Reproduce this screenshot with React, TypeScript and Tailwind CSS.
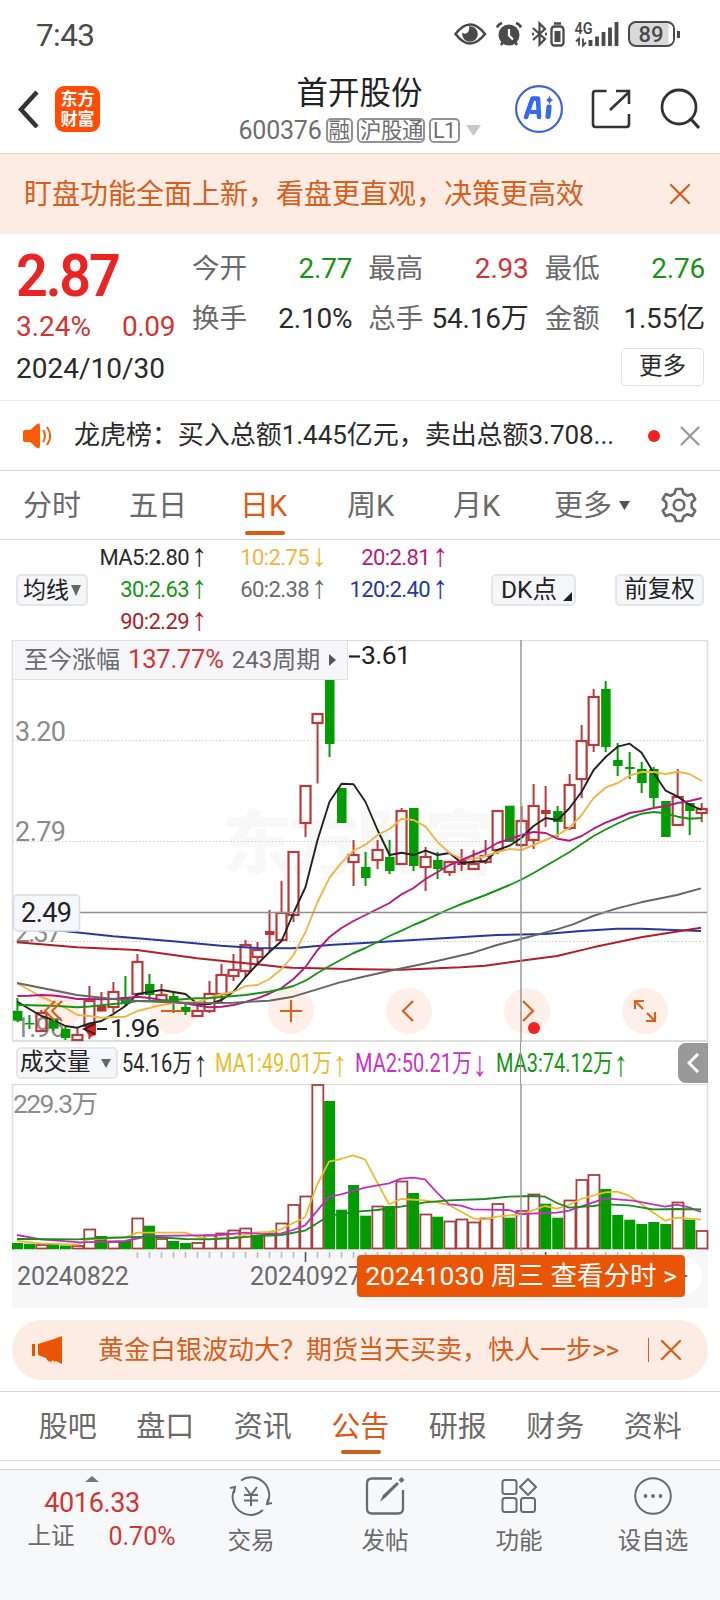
import React from 'react';
import { X } from 'lucide-react';

type Candle = [string, number, number, number, number];
type Point = [number, number];

// [colour, high, body top, body bottom, low]
const candles: Candle[] = [
  ['g', 998, 1010.7, 1020.7, 1022], ['g', 1015, 1023, 1024.5, 1029], ['r', 1010, 1012, 1031, 1032],
  ['g', 1018, 1019, 1028.7, 1031], ['g', 1027, 1029, 1038, 1040], ['r', 1028, 1034, 1040, 1041],
  ['r', 986, 1000, 1026, 1039], ['f', 992, 1006, 1011.5, 1012], ['r', 982, 991, 1007, 1013],
  ['g', 976, 997, 1004, 1006], ['r', 954, 961, 994, 998], ['g', 974, 984, 995, 1000],
  ['r', 984, 994, 1001, 1003], ['g', 991, 996, 1002, 1013], ['g', 1003, 1007, 1012, 1015],
  ['r', 1002, 1010, 1016, 1017], ['r', 981, 993, 1011, 1013], ['r', 964, 974, 994, 1003],
  ['r', 954, 969, 976, 981], ['r', 940, 944, 971, 977], ['r', 942, 949, 957, 963],
  ['f', 910, 931, 935, 952], ['r', 881, 912, 940, 941], ['r', 851, 851, 915, 922],
  ['r', 785, 785, 823, 837], ['r', 713, 713, 723, 783.5], ['g', 650, 650, 744, 757],
  ['g', 788, 788, 823, 823], ['r', 840, 854, 862, 886], ['g', 852, 867, 878, 886],
  ['r', 840, 849, 860, 869], ['g', 840, 857, 871, 874], ['r', 808, 810, 864, 864],
  ['g', 808, 808, 866, 871], ['r', 847, 856, 867, 891], ['g', 852, 860, 869, 879],
  ['r', 861, 861, 872, 876], ['f', 849, 860, 865, 871], ['r', 850, 863, 869, 870],
  ['r', 840, 855, 862, 864], ['r', 810, 810, 850, 854], ['g', 805.7, 805.7, 842, 842],
  ['r', 806, 820, 845, 847], ['r', 784, 805, 840, 849], ['f', 786, 810, 814, 827],
  ['g', 806, 811, 822, 837], ['r', 774, 784, 828, 830], ['r', 725, 740, 779, 798],
  ['r', 689, 696, 745, 752], ['g', 681, 689, 747, 752], ['g', 743, 760, 766, 776],
  ['g', 752, 767, 769, 779], ['g', 762, 769, 783, 793], ['g', 767, 769, 798, 807],
  ['g', 801, 801, 837, 837], ['r', 769, 796, 825, 825], ['g', 803, 803, 811, 835],
  ['r', 803, 808, 813, 822],
];

const volumes = [
  1243, 1243.7, 1244.5, 1243.5, 1245.5, 1245.5, 1229, 1236, 1241.5, 1241, 1218, 1225.7, 1238.5, 1241, 1243,
  1242.5, 1235, 1233, 1230, 1228, 1235, 1233, 1223, 1204.5, 1196, 1084.5, 1101, 1209.7, 1185, 1215.7,
  1206, 1206, 1181, 1193, 1214, 1216.7, 1221, 1219, 1222, 1218, 1203.5, 1217.7, 1210.5, 1194, 1203.7,
  1217.7, 1200, 1179.5, 1174.5, 1189, 1215, 1219.7, 1224, 1222, 1224, 1202, 1219.7, 1230.5,
];

// days whose volume bar is green although the candle is red
const greenVolume = [7, 20, 28, 44];

const ma5 = [
  1001.7, 1009, 1016, 1020, 1026, 1027.7, 1023.5, 1021, 1014, 1006, 994, 992, 990, 992, 994, 1004, 1004, 1000,
  991.7, 977, 964, 952, 941, 913, 887, 840, 801.7, 783.7, 784.3, 802, 830, 855, 852.7, 855, 850.7, 855, 853,
  863, 861.7, 861, 850, 845.7, 837.7, 826, 818, 820, 808, 791.7, 770, 757, 746.7, 743.7, 752.7, 772.7, 790.7,
  796.7, 804.7, 810,
];
const ma10 = [
  983.3, 990, 997, 1002, 1008, 1015, 1016, 1017.7, 1017, 1016.7, 1011, 1008, 1005, 1003, 1003, 1002, 998, 994,
  992, 986, 985, 979, 969, 955, 932, 902, 877.7, 862.7, 850.7, 844.7, 835, 829, 818.7, 820, 826.7, 842, 853,
  859, 858.7, 856, 852, 849, 850, 845, 840, 835, 827.7, 815, 798, 787.7, 783, 775.7, 772, 772, 774, 771.7, 774, 781,
];
const ma20 = [
  996, 995.7, 995, 995.5, 997, 999, 999, 999.3, 999, 998, 996.7, 998, 1000, 1001.7, 1003.3, 1005.5, 1007.3,
  1006.7, 1005, 1002, 998.3, 993.5, 988, 979, 967, 950, 937, 928, 921, 915, 909, 903, 894.3, 888, 879, 872,
  865, 860, 855, 850, 843, 839, 835, 832, 833, 838.7, 840.7, 836, 828.7, 822.7, 818, 813, 811, 808, 806, 803, 801, 798,
];
const ma30 = [
  1005, 1005.3, 1005.5, 1005.7, 1006.5, 1007.3, 1006.5, 1005.3, 1004, 1003, 1001, 1001, 1000.7, 1000, 999,
  998.3, 998, 997, 996, 995, 993.3, 991.5, 989, 986, 980.7, 973, 966, 959.5, 953, 948, 942, 936, 930.7, 925,
  920, 914.3, 909, 904, 899.5, 895, 890, 885, 879.5, 873, 866, 859, 852, 844, 836, 829.5, 823.5, 818, 813.7,
  812, 813.3, 816.7, 818.7, 818,
];
const ma60: Point[] = [
  [17, 983], [77, 995], [113, 999], [137, 1001], [197, 1003.3], [233, 1002.7], [269, 1000.7], [293, 996.7],
  [317, 989.3], [339, 982.7], [360, 977.5], [389, 971], [437, 961], [473, 952.7], [497, 945], [521, 939],
  [557, 929.3], [573, 924.3], [593, 916], [617, 908.3], [641, 902.3], [677, 895], [701, 888.3],
];
const ma90: Point[] = [
  [17, 942.3], [77, 947.3], [137, 950], [197, 958.3], [233, 962], [257, 964.3], [281, 967], [293, 967.7],
  [360, 969.3], [401, 969.7], [461, 967.3], [485, 965.7], [521, 960.7], [557, 956], [593, 947.3], [641, 937.3], [701, 927.7],
];
const ma120: Point[] = [
  [17, 926], [113, 936.3], [173, 941.3], [221, 945.7], [257, 948], [293, 948.3], [317, 946], [333, 944.7],
  [360, 943.3], [401, 940.7], [497, 935], [545, 934], [581, 931], [617, 928.7], [641, 928.7], [701, 931],
];

const volYellow: Point[] = [
  [17, 1241], [41, 1243.3], [77, 1244.7], [89, 1239.3], [125, 1237.7], [137, 1232.7], [185, 1232.7], [197, 1236.7],
  [209, 1239], [233, 1237.3], [257, 1232.3], [269, 1232], [281, 1229.3], [305, 1217.3], [317, 1185], [329, 1161.7],
  [341, 1159], [353, 1155.3], [365, 1159.3], [389, 1204.3], [401, 1199], [425, 1200.3], [437, 1202.3], [449, 1205],
  [473, 1218.3], [485, 1219.3], [497, 1216.7], [521, 1214.3], [545, 1206], [557, 1208.7], [569, 1205], [581, 1199],
  [605, 1192.3], [617, 1191.7], [629, 1195.7], [665, 1220.7], [677, 1217.7], [701, 1219.7],
];
const volPurple: Point[] = [
  [17, 1235], [41, 1239.3], [80, 1242.3], [125, 1241], [149, 1236], [197, 1235.3], [221, 1235], [245, 1232.7],
  [269, 1234.7], [281, 1233.3], [293, 1230], [305, 1225.3], [329, 1196.7], [341, 1194.3], [365, 1187.7],
  [389, 1183.3], [401, 1178.7], [413, 1177.7], [425, 1179.3], [437, 1192.7], [449, 1204.3], [461, 1205.7],
  [473, 1209.3], [509, 1210], [521, 1214], [557, 1212.7], [569, 1210.7], [605, 1198.3], [633, 1200.7],
  [665, 1206.7], [677, 1204.7], [689, 1207.3], [701, 1212],
];
const volGreen: Point[] = [
  [17, 1239], [77, 1239.3], [101, 1238], [149, 1236.7], [185, 1239], [209, 1239.3], [233, 1238], [257, 1236],
  [281, 1235], [305, 1230.7], [329, 1215.7], [360, 1211.3], [377, 1210], [401, 1206.7], [425, 1202.3],
  [449, 1200.3], [485, 1199], [509, 1196.7], [533, 1196], [545, 1196.7], [557, 1203], [569, 1207.7],
  [593, 1206], [605, 1204.3], [629, 1205.3], [653, 1209.3], [677, 1209], [701, 1209.3],
];

const cx = (i: number) => 17.4 + 12.005 * i;
const join = (pts: Point[]) => pts.map((p) => p.join(',')).join(' ');
const series = (ys: number[]) => join(ys.map((y, i) => [cx(i), y] as Point));

const RED = '#b83a3a';
const GREEN = '#009c00';

const quotes = [
  { label: '今开', value: '2.77', color: 'text-[#149614]' },
  { label: '最高', value: '2.93', color: 'text-[#d23434]' },
  { label: '最低', value: '2.76', color: 'text-[#149614]' },
  { label: '换手', value: '2.10%', color: 'text-[#2b2b2b]' },
  { label: '总手', value: '54.16万', color: 'text-[#2b2b2b]' },
  { label: '金额', value: '1.55亿', color: 'text-[#2b2b2b]' },
];

const averages = [
  { text: 'MA5:2.80', arrow: '↑', color: 'text-[#2b2b2b]' },
  { text: '10:2.75', arrow: '↓', color: 'text-[#efb643]' },
  { text: '20:2.81', arrow: '↑', color: 'text-[#b8197f]' },
  { text: '30:2.63', arrow: '↑', color: 'text-[#149614]' },
  { text: '60:2.38', arrow: '↑', color: 'text-[#6b6b6b]' },
  { text: '120:2.40', arrow: '↑', color: 'text-[#2438a0]' },
  { text: '90:2.29', arrow: '↑', color: 'text-[#b01e28]' },
];

const volumeLabels = [
  { text: '54.16万', arrow: '↑', color: 'text-[#2b2b2b]', box: 'w-[93px]' },
  { text: 'MA1:49.01万', arrow: '↑', color: 'text-[#e8bd2c]', box: 'w-[140px]' },
  { text: 'MA2:50.21万', arrow: '↓', color: 'text-[#c832c8]', box: 'w-[141px]' },
  { text: 'MA3:74.12万', arrow: '↑', color: 'text-[#149614]', box: 'w-[140px]' },
];

const Arrow = ({ children }: { children: string }) => (
  <span className="ml-[3px] inline-block w-[14px] origin-center scale-[1.45] text-center font-['Liberation_Sans']">{children}</span>
);

const StatusBar = () => (
  <div className="flex h-[68px] items-center justify-between pl-9 pr-[39px] text-[#4a4a4a]">
    <span className="pt-[3px] text-[31.5px] tracking-[-0.6px]">7:43</span>
    <svg width="228" height="40" viewBox="453 14 228 40" fill="none" stroke="#4a4a4a">
      <path d="M455.500 34 Q470 15 485 34 Q470 53 455.500 34Z" strokeWidth="2.600" />
      <circle cx="470" cy="34" r="7.800" fill="#4a4a4a" stroke="none" />
      <path d="M469 26a7 7 0 0 0-7 6q2 3 5 1 3-2 2-7Z" fill="#fff" stroke="none" />
      <circle cx="509" cy="35" r="10.500" fill="#4a4a4a" stroke="none" />
      <path d="M509 29v6.500l4 4" stroke="#fff" strokeWidth="2.200" />
      <path d="M497 27.500q1-3 5-4.500M521 27.500q-1-3-5-4.500M501 45l2-3M517 45l-2-3" strokeWidth="2.600" />
      <path d="M533 28l12 11-5.500 5.500V23.500L545 29l-12 11" strokeWidth="2.200" />
      <path d="M532 34h2M545 34h2" strokeWidth="2.500" />
      <rect x="551.500" y="26.500" width="12" height="19" rx="3" strokeWidth="2.300" />
      <path d="M554 23.500h7" strokeWidth="2.500" />
      <rect x="554.500" y="31" width="6" height="11" fill="#4a4a4a" stroke="none" />
      <text x="574.500" y="34" fontSize="16" fontWeight="600" fill="#4a4a4a" stroke="none" textLength="18" lengthAdjust="spacingAndGlyphs">4G</text>
      <path d="M579 45.500v-7l-3 3M583 38.500v7l3-3" strokeWidth="1.800" />
      <path d="M590.500 46v-6M597 46V36.500M603.500 46V32M610 46V27.500M616.500 46V22" strokeWidth="3.800" />
      <rect x="629" y="22" width="45" height="24" rx="7" fill="#d9d9d9" strokeWidth="2" />
      <path d="M668.500 24h1q3.500 1 3.500 5v10q0 4-3.500 5h-1z" fill="#fff" stroke="none" />
      <path d="M678.500 31v7" strokeWidth="3" />
      <text x="638.500" y="42" fontSize="22" fontWeight="500" fill="#4a4a4a" stroke="none" textLength="25">89</text>
    </svg>
  </div>
);

const Header = () => (
  <div className="flex h-[86px] items-start border-b border-[#d4d4d4] px-[18px]">
    <div className="mt-[18px] flex w-[224px] items-center gap-[16px]">
      <svg width="21" height="38" viewBox="0 0 21 38" fill="none" stroke="#333" strokeWidth="4.500">
        <path d="M19 2 3 19.500 19 37" />
      </svg>
      <div className="flex h-[46px] w-[45px] flex-col items-center justify-center gap-[2px] rounded-[9px] bg-[#ff4d05] text-[17px] font-bold leading-[18px] text-white">
        <span>东方</span>
        <span>财富</span>
      </div>
    </div>
    <div className="flex w-[235px] flex-col items-center">
      <h1 className="mt-[9px] text-[31.5px] leading-[34px] text-[#222]">首开股份</h1>
      <div className="mt-[7px] flex items-center gap-1 whitespace-nowrap text-[21.5px] leading-none text-[#6e6e6e]">
        <span className="text-[25px] tracking-[-0.2px]">600376</span>
        <span className="flex h-[25px] items-center rounded-[5px] border-2 border-[#929292] px-px">融</span>
        <span className="flex h-[25px] items-center rounded-[5px] border-2 border-[#929292] pl-px tracking-[-0.5px]">沪股通</span>
        <span className="flex h-[25px] items-center rounded-[5px] border-2 border-[#929292] px-[2px] tracking-[-0.6px]">L1</span>
        <svg className="ml-[2px]" width="15" height="11" viewBox="0 0 15 11"><path d="M0 0h15L7.500 11z" fill="#c8c8c8" /></svg>
      </div>
    </div>
    <svg className="ml-[37px] mt-[15px] shrink-0" width="188" height="52" viewBox="514 83 188 52" fill="none">
      <circle cx="539" cy="109" r="22.900" stroke="#3f63d8" strokeWidth="2.200" />
      <path d="M526 117l6.500-18.500h5.500l1 18.500" stroke="#3566f5" strokeWidth="4.600" strokeLinejoin="round" strokeLinecap="round" />
      <path d="M530 112h8" stroke="#3566f5" strokeWidth="4" />
      <path d="M549 107l-1 9.500" stroke="#3566f5" strokeWidth="5.200" strokeLinecap="round" />
      <path d="M549.500 95.500q1 4 4 4.500q-3 .5-4 4.500q-1-4-4-4.500q3-.5 4-4.500z" fill="#3f63d8" />
      <path d="M606.500 91H595.500q-2.500 0-2.500 2.500v30.500q0 3 2.500 3h31q2.500 0 2.500-3v-10M610 110l18-17M616 91h13v13" stroke="#333" strokeWidth="2.600" />
      <circle cx="679" cy="107" r="17" stroke="#333" strokeWidth="2.800" />
      <path d="M690 118l9 10" stroke="#333" strokeWidth="3.200" />
    </svg>
  </div>
);

const Quote = () => (
  <div className="flex h-[167px] border-b border-[#ebebeb] text-[28px] leading-none">
    <div className="w-[192px] pl-[16px]">
      <div className="mt-[12px] flex h-[60px] origin-left scale-x-[.93] items-center text-[60px] font-semibold tracking-[-2.4px] text-[#e82424]">2.87</div>
      <div className="mt-[7px] flex h-7 w-[159px] justify-between text-[#d23434]">
        <span>3.24%</span>
        <span className="tracking-[-0.4px]">0.09</span>
      </div>
      <div className="mt-[14px] text-[#2b2b2b]">2024/10/30</div>
    </div>
    <div className="flex w-[512px] flex-col">
      <div className="mt-[21px] grid grid-cols-3 gap-x-[17px] gap-y-[22px]">
        {quotes.map((q) => (
          <div key={q.label} className="flex justify-between whitespace-nowrap">
            <span className="text-[27.5px] leading-7 text-[#6a6a6a]">{q.label}</span>
            <span className={`-mr-px ml-[-10px] tracking-[-0.2px] ${q.color}`}>{q.value}</span>
          </div>
        ))}
      </div>
      <div className="mt-[15px] flex h-[38px] w-[83px] items-center justify-center self-end rounded-[5px] border border-[#e2e2e2] text-[23.5px] text-[#2b2b2b]">更多</div>
    </div>
  </div>
);

const News = () => (
  <div className="flex h-[70px] items-center border-b border-[#d4d4d4] pl-[22px]">
    <svg width="31" height="26" viewBox="0 0 31 26" fill="none" stroke="#ff5a0a" strokeWidth="2">
      <path d="M1 9q0-2 2-2h5l7-6q3-1.500 3 2v20q0 3.500-3 2l-7-6H3q-2 0-2-2z" fill="#ff5a0a" stroke="none" />
      <path d="M21 7q4 6 0 12M25 4q6.500 9 0 18" />
    </svg>
    <span className="-mt-px ml-[21px] w-[544px] whitespace-nowrap text-[26px] leading-none tracking-[-0.04px] text-[#2b2b2b]">龙虎榜：买入总额1.445亿元，卖出总额3.708...</span>
    <span className="ml-[30px] h-3 w-3 rounded-full bg-[#f02222]" />
    <X className="ml-[13px] text-[#9a9a9a]" size={34} strokeWidth={1.6} />
  </div>
);

const periods = [
  { name: '分时', box: 'w-[106px]' },
  { name: '五日', box: 'w-[111px]' },
  { name: '日K', box: 'w-[107px]' },
  { name: '周K', box: 'w-[106px]' },
  { name: '月K', box: 'w-[101px]' },
];

const PeriodTabs = () => (
  <div className="flex h-[69px] items-center border-b border-[#d4d4d4] pl-[23px] text-[29px] leading-none text-[#6a6a6a]">
    {periods.map((p) => (
      <div key={p.name} className={`relative pt-[2px] ${p.box} ${p.name === '日K' ? 'text-[#dc5a14]' : ''}`}>
        {p.name}
        {p.name === '日K' && <span className="absolute -bottom-[14px] left-[5px] h-1 w-10 rounded bg-[#dc5a14]" />}
      </div>
    ))}
    <span className="pt-[2px]">更多</span>
    <svg className="ml-[7px]" width="11" height="9" viewBox="0 0 11 9"><path d="M0 0h11L5.500 9z" fill="#555" /></svg>
    <svg className="ml-[31px]" width="36" height="36" viewBox="-18 -18 36 36" fill="none" stroke="#6a6a6a" strokeWidth="2.600" strokeLinejoin="round">
      <path d="M-3-16h6l1.500 4.500 4 2.300 4.700-1.800 3 5.200-3.500 3.300v5l3.500 3.300-3 5.200-4.700-1.800-4 2.300L3 16h-6l-1.500-4.500-4-2.300-4.700 1.800-3-5.200 3.500-3.300v-5l-3.500-3.300 3-5.200 4.700 1.800 4-2.300z" />
      <circle r="5.300" />
    </svg>
  </div>
);

const Averages = () => (
  <div className="flex h-[100px] pl-4 text-[23px] leading-none text-[#222]">
    <div className="mt-[34px] flex h-[32px] w-[72px] shrink-0 items-center justify-center gap-[2px] rounded-[5px] border-2 border-[#e4e6ec] bg-[#f5f6f9]">
      均线
      <svg width="10" height="11" viewBox="0 0 10 11"><path d="M0 0h10L5 11z" fill="#666" /></svg>
    </div>
    <div className="mt-[7px] grid h-[96px] w-[360px] shrink-0 grid-cols-[118px_120px_121px] content-start text-[22px] tracking-[-0.6px]">
      {averages.map((a) => (
        <div key={a.text} className={`flex h-8 justify-end ${a.color}`}>
          {a.text}
          <Arrow>{a.arrow}</Arrow>
        </div>
      ))}
    </div>
    <div className="relative ml-[43px] mt-[34px] flex h-[32px] w-[85px] shrink-0 items-center rounded-[5px] border-2 border-[#e4e6ec] bg-[#f5f6f9] pl-[8px] text-[24.5px]">
      DK点
      <svg className="absolute bottom-[3px] right-[2px]" width="9" height="9" viewBox="0 0 9 9"><path d="M9 0v9H0z" fill="#222" /></svg>
    </div>
    <div className="ml-[39px] mt-[34px] flex h-[32px] w-[89px] shrink-0 items-center justify-center rounded-[5px] border-2 border-[#e4e6ec] bg-[#f5f6f9] text-[23.5px]">前复权</div>
  </div>
);

const PriceChart = () => (
  <svg className="block" width="720" height="402" viewBox="0 640 720 402" fill="none">
    <path d="M12.500 1041V640.500H707.500V1041" stroke="#dedede" strokeWidth="1.500" />
    <path d="M12 1041H708" stroke="#dedede" strokeWidth="2" />
    <text x="222" y="869" fontSize="70" fontWeight="900" fill="#f8f8f8" textLength="272">东方财富</text>
    <path d="M13 740.500H707M13 841.500H707M13 941.500H707" stroke="#cfcfcf" strokeDasharray="1.500 2" />
    {[56, 173, 291, 409, 527, 645].map((x) => (
      <circle key={x} cx={x} cy="1011" r="23" fill="#fef0e8" />
    ))}
    <g fontSize="27" fill="#8c8c8c">
      <text x="15" y="741" textLength="51">3.20</text>
      <text x="15" y="841" textLength="51">2.79</text>
      <text x="15" y="942" textLength="47">2.37</text>
      <text x="15" y="1037" textLength="50">1.96</text>
    </g>
    {candles.map(([kind, high, top, bottom, low], i) => {
      const x = cx(i);
      const color = kind === 'g' ? GREEN : RED;
      return (
        <g key={i} stroke={color} strokeWidth="2">
          {high < top && <path d={`M${x} ${high}V${top}`} />}
          {low > bottom && <path d={`M${x} ${bottom}V${low}`} />}
          {kind === 'r' ? (
            <rect x={x - 5} y={top + 1} width="10" height={bottom - top - 1} strokeWidth="2.200" />
          ) : (
            <rect x={x - 4.5} y={top} width="9.500" height={bottom - top} fill={kind === 'g' ? GREEN : '#c42e2e'} stroke="none" />
          )}
        </g>
      );
    })}
    <path d="M84 1029l5-6h7v12l-6 2z" fill="#e02020" />
    <g strokeWidth="1.900" strokeLinejoin="round">
      <polyline points={join(ma120)} stroke="#2438a0" />
      <polyline points={join(ma90)} stroke="#b01e28" />
      <polyline points={series(ma5)} stroke="#222" />
      <polyline points={series(ma10)} stroke="#efb643" />
      <polyline points={series(ma20)} stroke="#b8197f" />
      <polyline points={series(ma30)} stroke="#149614" />
      <polyline points={join(ma60)} stroke="#666" />
    </g>
    <g stroke="#222" strokeWidth="1.800">
      <path d="M97 1029h10M95 1024l-11 5 11 5" />
      <path d="M349 656.500h11" strokeWidth="2.200" />
    </g>
    <g fontSize="26.500" fill="#222">
      <text x="110" y="1037" textLength="50">1.96</text>
      <text x="361" y="664" textLength="50">3.61</text>
    </g>
    <g stroke="#d9611c" strokeWidth="2.200">
      <path d="M55 1001l-10 10 10 10M62 1001l-10 10 10 10M161 1011h22M280 1011h22M291 1000v22M413 1001l-10 10 10 10M523 1001l10 10-10 10" />
      <path d="M643 1009l-8-8M635 1009v-8h9M647 1013l8 8M655 1012v9h-9" />
    </g>
    <path d="M80 912.500H707" stroke="#8f8f8f" strokeWidth="1.400" />
    <path d="M521 640V1042" stroke="#999" strokeWidth="1.500" />
    <circle cx="534" cy="1028" r="6" fill="#f02222" />
    <rect x="13.500" y="895" width="66" height="36" rx="4" fill="#f6f7fa" stroke="#d9dce4" strokeWidth="1.500" />
    <text x="21" y="922" fontSize="27" fill="#222" textLength="51">2.49</text>
  </svg>
);

const VolumeHeader = () => (
  <div className="relative flex h-[42px] pl-4 text-[23.5px] leading-none text-[#222]">
    <div className="mt-[5px] flex h-[32px] w-[102px] shrink-0 items-center gap-[10px] rounded-[5px] border-2 border-[#e4e6ec] bg-[#f5f6f9] pl-[2px]">
      成交量
      <svg width="10" height="9" viewBox="0 0 10 9"><path d="M0 0h10L5 9z" fill="#666" /></svg>
    </div>
    <div className="ml-[4px] flex">
      {volumeLabels.map((v) => (
        <div key={v.text} className={`${v.box} shrink-0 pt-[9px] ${v.color}`}>
          <span className="inline-block origin-left scale-x-[.8] whitespace-nowrap text-[25px]">
            {v.text}
            <Arrow>{v.arrow}</Arrow>
          </span>
        </div>
      ))}
    </div>
    <div className="absolute bottom-0 left-[520px] top-0 w-px bg-[#999]" />
    <div className="absolute right-3 top-[1px] flex h-10 w-[30px] items-center justify-center rounded-l-[8px] bg-[#999]">
      <svg width="12" height="20" viewBox="0 0 12 20" fill="none" stroke="#fff" strokeWidth="3"><path d="M11 1 2 10l9 9" /></svg>
    </div>
  </div>
);

const VolumeChart = () => (
  <svg className="block" width="720" height="167" viewBox="0 1084 720 167" fill="none">
    <path d="M12.500 1251V1084.500H707.500V1251" stroke="#dedede" strokeWidth="1.500" />
    <text x="13" y="1113" fontSize="26.500" fill="#8c8c8c" textLength="85">229.3万</text>
    {volumes.map((top, i) => {
      const x = cx(i);
      if (candles[i][0] === 'g' || greenVolume.includes(i)) {
        return <rect key={i} x={x - 5.4} y={top} width="11" height={1249.3 - top} fill={GREEN} />;
      }
      return <rect key={i} x={x - 5.2} y={top + 0.5} width="11" height={1248 - top} fill="#fff" stroke="#a94040" strokeWidth="1.800" />;
    })}
    <g strokeWidth="1.800" strokeLinejoin="round">
      <polyline points={join(volYellow)} stroke="#e8bd2c" />
      <polyline points={join(volPurple)} stroke="#c030c0" />
      <polyline points={join(volGreen)} stroke="#1e8a1e" />
    </g>
    <path d="M521 1084V1251" stroke="#999" strokeWidth="1.500" />
  </svg>
);

const DateAxis = () => (
  <div className="relative mx-3 h-[57px] bg-[#f7f7fa] text-[25px] leading-none text-[#6a6a6a]">
    <svg className="block" width="696" height="11" viewBox="12 0 696 11">
      {Array.from({ length: 44 }, (_, n) => n + 10).map((i) => (
        <path key={i} d={`M${cx(i)} 1v${i === 24 ? 10 : 6}`} stroke={i === 24 || i === 44 ? '#555' : '#bbb'} strokeWidth="1.600" />
      ))}
    </svg>
    <div className="mt-[2px] flex pl-[5px] tracking-[-0.1px]">
      <span className="w-[233px]">20240822</span>
      <span>20240927</span>
    </div>
    <div className="absolute right-[6px] top-[7px] flex h-9 w-9 items-center justify-center rounded-full bg-white">
      <svg width="8" height="8" viewBox="0 0 8 8"><path d="M0 0l8 4-8 4z" fill="#555" /></svg>
    </div>
    <div className="absolute left-[345px] top-[4px] flex h-[42px] w-[328px] items-center justify-center whitespace-nowrap rounded-[4px] bg-[#e95504] text-[26.5px] text-white">
      20241030 周三 查看分时 &gt;
    </div>
  </div>
);

const infoTabs = ['股吧', '盘口', '资讯', '公告', '研报', '财务', '资料'];

const App: React.FC = () => {
  return (
    <div className="h-[1600px] w-[720px] overflow-hidden bg-white font-[Roboto,'Noto_Sans_CJK_SC',sans-serif]">
      <StatusBar />
      <Header />

      {/* Feature banner */}
      <div className="flex h-20 items-center justify-between bg-[#fdece3] pl-[24px] pr-[22px] text-[28px] leading-none text-[#d65f1e]">
        <span className="pt-[2px]">盯盘功能全面上新，看盘更直观，决策更高效</span>
        <X size={36} strokeWidth={1.5} />
      </div>

      <Quote />
      <News />
      <PeriodTabs />
      <Averages />

      {/* Price chart */}
      <div className="relative">
        <PriceChart />
        <div className="absolute left-3 top-0 flex h-[40px] w-[336px] items-center whitespace-nowrap border border-[#e0e0e4] bg-[#f7f7fb] pl-[11px] text-[24px] leading-none text-[#6a6a6a]">
          至今涨幅
          <span className="ml-[8px] text-[25.5px] tracking-[-0.2px] text-[#d23434]">137.77%</span>
          <span className="ml-[8px]">243周期</span>
          <svg className="ml-[9px]" width="7" height="12" viewBox="0 0 7 12"><path d="M0 0l7 6-7 6z" fill="#555" /></svg>
        </div>
      </div>

      <VolumeHeader />
      <VolumeChart />
      <DateAxis />

      {/* Promo strip */}
      <div className="mx-3 mt-3 flex h-[60px] items-center rounded-full bg-[#fdece3] pl-5 text-[26px] leading-none text-[#d65f1e]">
        <svg width="31" height="28" viewBox="0 0 31 28" fill="#ea5504">
          <path d="M0 8h3v12H0zM6 8l16-5 8-3v28l-6-3-2 1-1-2-2 2-3-1-2-3-8-3z" />
        </svg>
        <span className="ml-[35px] w-[530px] whitespace-nowrap">黄金白银波动大？期货当天买卖，快人一步&gt;&gt;</span>
        <span className="ml-[20px] h-6 w-px bg-[#d65f1e]" />
        <X className="ml-[4px]" size={36} strokeWidth={1.5} />
      </div>

      {/* Info tabs */}
      <div className="mt-[11px] flex h-[70px] items-center border-y border-[#d4d4d4] pl-[19px] text-[29px] leading-none text-[#6a6a6a]">
        {infoTabs.map((t) => (
          <div key={t} className={`relative w-[97.5px] pt-[3px] text-center ${t === '公告' ? 'text-[#dc5a14]' : ''}`}>
            {t}
            {t === '公告' && <span className="absolute -bottom-[12px] left-[29px] h-1 w-10 rounded bg-[#c86020]" />}
          </div>
        ))}
      </div>

      {/* Bottom bar */}
      <div className="mt-2 flex h-[131px] border-t border-[#d4d4d4] bg-[#f7f8fa] text-[23.5px] leading-none text-[#6a6a6a]">
        <div className="flex w-[184px] flex-col items-center pt-[6px]">
          <svg width="14" height="6" viewBox="0 0 14 6"><path d="M0 6l7-6 7 6z" fill="#777" /></svg>
          <span className="mt-[8px] text-[27px] tracking-[-0.4px] text-[#d23434]">4016.33</span>
          <div className="mt-[7px] flex items-center gap-[34px] pl-[20px]">
            <span className="-ml-px pt-px">上证</span>
            <span className="text-[25px] text-[#d23434]">0.70%</span>
          </div>
        </div>
        <div className="flex w-[134px] flex-col items-center pt-[6px]">
          <svg width="44" height="40" viewBox="-22 -20 44 40" fill="none" stroke="#6a6a6a" strokeWidth="2">
            <path d="M-16-8A18 18 0 0 0 12 14M-10-15.500A18 18 0 0 1 16 8M-21-8l5-1-1 6M21 7l-5 1 1-5" />
            <path d="M-6-9l6 8 6-8M0-1V10M-7-1H7M-7 4.500H7" />
          </svg>
          <span className="mt-[14px]">交易</span>
        </div>
        <div className="flex w-[134px] flex-col items-center pt-[6px]">
          <svg width="40" height="40" viewBox="0 0 40 40" fill="none" stroke="#6a6a6a" strokeWidth="2.300">
            <path d="M27 2.500H7q-5 0-5 5v25q0 5 5 5h26q5 0 5-5V14" />
            <path d="M15 26l3-7L32 6l2 2-13 13z" fill="#6a6a6a" stroke="none" />
            <path d="M35 5.500l3-3" strokeWidth="4" />
          </svg>
          <span className="mt-[14px]">发帖</span>
        </div>
        <div className="flex w-[134px] flex-col items-center pt-[6px]">
          <svg width="36" height="40" viewBox="0 0 36 40" fill="none" stroke="#6a6a6a" strokeWidth="2">
            <rect x="1.500" y="4" width="14" height="14" rx="2.500" />
            <rect x="1.500" y="22" width="14" height="14" rx="2.500" />
            <rect x="20" y="22" width="14" height="14" rx="2.500" />
            <path d="M27 3l8 8-8 8-8-8z" strokeLinejoin="round" />
          </svg>
          <span className="mt-[14px]">功能</span>
        </div>
        <div className="flex w-[134px] flex-col items-center pt-[6px]">
          <svg width="40" height="40" viewBox="-20 -20 40 40" fill="none" stroke="#6a6a6a" strokeWidth="2">
            <circle r="17.800" />
            <g fill="#6a6a6a" stroke="none">
              <circle cx="-7.500" r="1.900" />
              <circle r="1.900" />
              <circle cx="7.500" r="1.900" />
            </g>
          </svg>
          <span className="mt-[14px]">设自选</span>
        </div>
      </div>
    </div>
  );
};

export default App;
